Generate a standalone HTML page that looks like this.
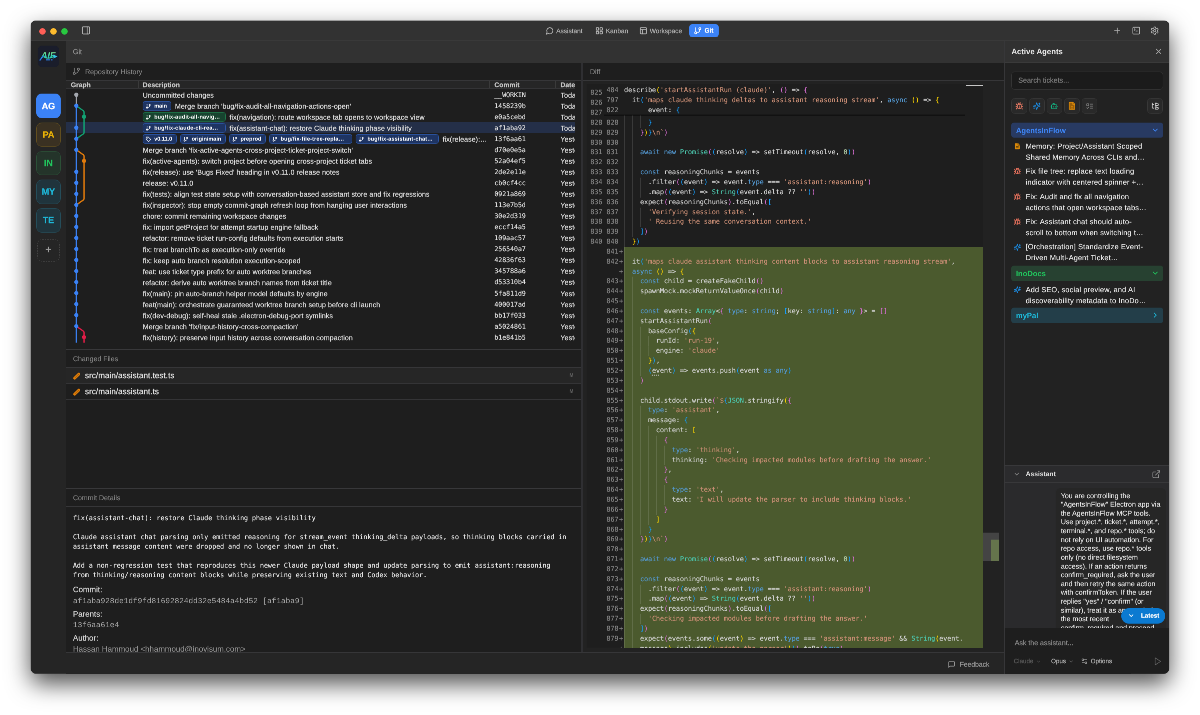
<!DOCTYPE html>
<html lang="en"><head><meta charset="utf-8"><title>AgentsInFlow – Git</title>
<style>
html,body{margin:0;padding:0;background:#fff;width:1200px;height:715px;overflow:hidden}
*{box-sizing:border-box}
body{font-family:"Liberation Sans",sans-serif;-webkit-font-smoothing:antialiased}
#win{will-change:transform;text-rendering:geometricPrecision;position:absolute;left:0;top:0;width:2277px;height:1306px;transform:translate(30.7px,20.6px) scale(.5);transform-origin:0 0;border-radius:11px;overflow:hidden;-webkit-text-stroke:.3px;background:#1e1e1e;box-shadow:0 20px 48px rgba(0,0,0,.7),0 0 1.5px rgba(0,0,0,.5);color:#ddd}
:where(#win *){position:absolute}
:where(#win) :where(span,svg,em,br){position:static}
#win .abs{position:absolute;display:block;line-height:0}
.ic{flex:none;display:block}
/* titlebar */
#titlebar{left:0;top:0;width:2277px;height:40.8px;background:#323232;border-bottom:2px solid #393939;z-index:5}
.tl{position:absolute;top:15.1px;width:13.4px;height:13.4px;border-radius:50%}
.tab{top:7.4px;height:26px;display:flex;align-items:center;font-size:13px;color:#b2b2b2;white-space:nowrap}
.tab svg{margin-right:5px}
.tab.active{top:6.8px;width:59.2px;padding-left:8.8px;background:#3b82f6;color:#fff;border-radius:6px;font-weight:bold}
/* sidebar */
#sidebar{left:0;top:0;width:70.6px;height:1306px;background:#252525}
#logo{left:14px;top:49.8px;width:43px;height:43px;background:#1a1d2b;border-radius:9px}
.proj{left:10.8px;width:49px;height:48.6px;border-radius:11px;font-weight:bold;font-size:18px;line-height:48.6px;text-align:center;border:1.5px solid transparent;letter-spacing:-.2px}
.proj.ag{background:#3b82f6;color:#fff}
.proj.pa{background:#3a3122;border-color:#66511f;color:#eab308;line-height:46px}
.proj.inn{background:#24342a;border-color:#2c5238;color:#22c55e;line-height:46px}
.proj.my{background:#20343c;border-color:#25505e;color:#1fb8d8;line-height:46px}
.proj.te{background:#20343c;border-color:#25505e;color:#1fb8d8;line-height:46px}
#addproj{left:13.2px;top:437.2px;width:44.5px;height:44.5px;border:1.5px dashed #454545;border-radius:10px;color:#a0a0a0;font-size:22px;line-height:40px;text-align:center}
/* git head */
#githead{z-index:3;left:70.6px;top:40px;width:1875.8px;height:44.5px;background:#323232;font-size:14.4px;color:#929292;line-height:46px;padding-left:13.6px}
/* panels */
.phead{left:0;width:100%;height:36.3px;display:flex;align-items:center;padding-left:13.8px;font-size:14px;color:#858585;-webkit-text-stroke:.15px;border-bottom:2px solid #363638;background:#1e1e1e;white-space:nowrap}
.phead.bt{border-top:2px solid #38383a;height:38px;padding-top:1px}
#left{left:70.6px;top:0;width:1034px;height:1262.8px;background:#1e1e1e;border-right:4px solid #2f2f32;overflow:hidden}
#left>.phead:first-child{padding-left:12.1px}
#thead{left:0;top:120.8px;width:1018.2px;height:16px;background:#262626;border-bottom:2px solid #343436;font-weight:bold;font-size:13.5px;color:#c6c6c6}
#thead span{position:absolute;top:-1px;line-height:17px}
#thead i{top:0;width:2px;height:14px;background:#3a3a3a}
#rows{left:0;top:0;width:1018.2px;height:700px}
.crow{left:0;width:1018.2px;height:22.04px;line-height:21.7px;font-size:14px;color:#dedede;letter-spacing:.15px}
.crow.sel{background:#242f48}
.cdesc{left:153.5px;top:0;width:690px;height:22.04px;overflow:hidden;white-space:nowrap;display:flex;align-items:center}
.cmsg{flex:none;position:relative;top:1.6px}
.chash{-webkit-text-stroke:.2px;left:856.6px;top:1.6px;font-family:"DejaVu Sans Mono",monospace;font-size:13.1px;letter-spacing:0;color:#e2e2e2}
.cdate{left:989px;top:1.6px;width:29.4px;overflow:hidden;white-space:nowrap}
.bdg{flex:none;display:inline-flex;align-items:center;height:18.6px;border:1.6px solid;border-radius:4.5px;padding:0 7.6px 0 5.1px;margin-right:7.3px;font-weight:bold;font-size:11px;letter-spacing:0;color:#fff;line-height:16px;-webkit-text-stroke:0;padding-top:1.4px}
.bdg svg{margin-right:6.2px}
.bdg.bl{background:#1e3463;border-color:#2e5bb0}
.bdg.gr{background:#17432f;border-color:#1f7a4c}
.frow{left:0;width:100%;height:32px;padding-top:1.5px;border-bottom:2px solid #343436;display:flex;align-items:center;padding-left:12.4px;font-size:16.1px;letter-spacing:.1px;color:#e2e2e2;white-space:nowrap}
.frow.on{background:#262626}
.frow svg{margin-right:7.6px}
.frow em{position:absolute;right:15px;top:9px;font-style:normal;font-weight:bold;font-size:9.5px;line-height:12px;color:#707070;-webkit-text-stroke:0}
#cdet{left:0;top:972.8px;width:100%;height:292px;overflow:hidden}
#cmsg{-webkit-text-stroke:.2px;left:13.8px;top:14.3px;font-family:"DejaVu Sans Mono",monospace;font-size:13.22px;line-height:18.94px;color:#e8e8e8;white-space:pre}
.ml{position:static}
.lbl{left:13.8px;font-size:15.6px;letter-spacing:.1px;line-height:20px;color:#d4d4d4;margin-top:-971.6px}
.val{-webkit-text-stroke:0;left:13.8px;font-family:"Liberation Mono",monospace;font-size:15.42px;line-height:22px;color:#a6a6a6;margin-top:-971.6px;white-space:nowrap}
.val.sans{font-family:"Liberation Sans",sans-serif;font-size:15.8px;color:#949494;-webkit-text-stroke:.1px}
/* diff */
#diff{left:1104.6px;top:0;width:842px;height:1262.8px;background:#222}
#editor{-webkit-text-stroke:.22px;left:7.6px;top:127.2px;width:792.6px;height:1127.2px;background:#1e1e1e;overflow:hidden;font-family:"DejaVu Sans Mono",monospace;font-size:13.25px;color:#d4d4d4}
#lines{left:0;top:8.2px;width:100%}
.cl{position:relative;height:19.85px;line-height:19.85px;white-space:pre;width:100%}
.ln1{position:absolute;left:0;width:31px;text-align:right;color:#858585}
.ln2{position:absolute;left:0;width:63.2px;text-align:right;color:#858585}
.pl{position:absolute;left:64.6px;color:#858585}
.cd{position:absolute;left:74.6px;right:0;top:0;height:100%}
.ins .cd{background:#4b5a2e;box-shadow:0 1px 0 #4b5a2e}
.ig{top:0;width:1px;height:100%;background:rgba(255,255,255,.13)}
#sticky{left:34.6px;top:0;width:721.8px;height:60.6px;background:#1e1e1e;padding-top:2.8px}
.sl{position:relative;height:19.8px;line-height:19.8px;white-space:pre}
.sl .ln2{width:28.6px}
.sl .cd{left:40px}
#tick{left:758.8px;top:1.7px;width:33.6px;height:2px;background:#c6c6c6}
#stsh{left:0;top:100%;width:100%;height:3.4px;background:linear-gradient(rgba(0,0,0,.95),rgba(0,0,0,.55) 45%,rgba(0,0,0,0))}
#ovr{left:800.2px;top:127.2px;width:31.8px;height:1127.2px}
#ovv{left:0;top:896.6px;width:31.8px;height:56.8px;background:#444}
#ovg{left:15.8px;top:910.8px;width:16px;height:42.6px;background:#65744c}
.k{color:#569cd6}.t{color:#4ec9b0}.s{color:#ce9178}.n{color:#b5cea8}
.b0{color:#ffd700}.b1{color:#da70d6}.b2{color:#179fff}
/* footer */
#footer{left:70.6px;top:1262.8px;width:1876px;height:43.4px;background:#252525;border-top:2px solid #363638;font-size:13.5px;color:#9a9a9a}
#footer svg{position:absolute;left:1763.7px;top:15px}
#footer span{position:absolute;left:1787.4px;top:0;line-height:45.5px}
/* right */
#right{left:1946.4px;top:0;width:331px;height:1306px;background:#222;border-left:2px solid #38383a;z-index:4}
#rhead{left:0;top:40px;width:100%;height:44.5px;background:#313131;border-bottom:2px solid #3a3a3a;font-weight:bold;font-size:15.5px;color:#e6e6e6;line-height:46.5px;padding-left:13px;-webkit-text-stroke:0}
#search{left:13px;top:101.8px;width:303.6px;height:35.8px;background:#1b1b1b;border:1.6px solid #363636;border-radius:7px;padding-left:12.6px;font-size:14.3px;color:#7c7c7c;line-height:34px}
.fbtn{top:155.2px;width:31.2px;height:31px;border:1.6px solid #393939;border-radius:6.5px;background:#292929;display:flex;align-items:center;justify-content:center;margin-left:-.6px}
.grp{left:13px;width:303.6px;height:30.6px;border-radius:5.5px;font-weight:bold;font-size:15.2px;line-height:33.4px;padding-left:9px;-webkit-text-stroke:0}
.grp svg{position:absolute;right:7.6px;top:7px}
.grp.g1{background:#283a62;color:#3f86f6}
.grp.g2{background:#274131;color:#22c55e}
.grp.g3{background:#233e49;color:#1fb8d8}
.titem{left:13px;width:303.6px;height:50.4px}
.titem svg{position:absolute;left:4.2px;top:7.6px}
.tt{left:28.5px;top:4.4px;font-size:14.6px;line-height:22.1px;color:#ececec;white-space:nowrap;letter-spacing:.32px;-webkit-text-stroke:.15px}
#ahead{left:0;top:888.8px;width:100%;height:36px;background:#2b2b2d;border-top:2px solid #38383a;border-bottom:2px solid #38383a;display:flex;align-items:center;padding-left:17px;font-weight:bold;font-size:13.4px;color:#dedede;-webkit-text-stroke:0}
#ahead>svg{margin-right:10.5px}
#chat{left:0;top:924.8px;width:100%;height:290.4px;background:#2a2a2c;overflow:hidden}
#bubble{left:101.6px;top:10px;width:220.6px;height:400px;background:#262626;border-radius:10px;padding:6.8px 0 0 10.2px;font-size:14px;line-height:17.62px;color:#e6e6e6;white-space:nowrap;-webkit-text-stroke:.15px}
#bubble div{position:static}
#latest{left:232.4px;top:250px;width:88px;height:30.9px;border-radius:15.5px;background:#0b7ad1;color:#fff;font-weight:bold;font-size:12.5px;line-height:30.9px}
#latest svg{position:absolute;left:13.2px;top:8.6px}
#latest span{position:absolute;left:39.6px;top:0}
#inp{left:0;top:1215.2px;width:100%;height:91px;background:#1e1e1e}
#ask{left:19.6px;top:18.5px;font-size:14px;line-height:20px;color:#8a8a8a;white-space:nowrap}
#ctl{left:17.6px;top:57px;width:313px;height:18px;display:flex;align-items:center;font-size:12.4px;color:#b4b4b4;white-space:nowrap}
#ctl .dim{color:#5a5a5a}

.hint{text-decoration:underline dotted #c8c8c8;text-decoration-thickness:2px;text-underline-offset:3.5px}

</style></head>
<body>
<div id="win">

<div id="titlebar">
  <span class="tl" style="left:16.7px;background:#ff5f57"></span>
  <span class="tl" style="left:38.8px;background:#febc2e"></span>
  <span class="tl" style="left:60.9px;background:#28c840"></span>
  <span class="abs" style="left:101px;top:10.4px;color:#b4b4b4"><svg class="ic" width="19" height="19" viewBox="0 0 24 24" fill="none" stroke="currentColor" stroke-width="2" stroke-linecap="round" stroke-linejoin="round" style=""><rect width="18" height="18" x="3" y="3" rx="2"/><path d="M15 3v18"/></svg></span>
  <div class="tab" style="left:1029.5px"><svg class="ic" width="16.4" height="16.4" viewBox="0 0 24 24" fill="none" stroke="currentColor" stroke-width="2.5" stroke-linecap="round" stroke-linejoin="round" style=""><path d="M7.9 20A9 9 0 1 0 4 16.1L2 22Z"/></svg><span>Assistant</span></div>
  <div class="tab" style="left:1128.8px"><svg class="ic" width="16.4" height="16.4" viewBox="0 0 24 24" fill="none" stroke="currentColor" stroke-width="2.5" stroke-linecap="round" stroke-linejoin="round" style=""><rect width="7" height="7" x="3" y="3" rx="1"/><rect width="7" height="7" x="14" y="3" rx="1"/><rect width="7" height="7" x="14" y="14" rx="1"/><rect width="7" height="7" x="3" y="14" rx="1"/></svg><span>Kanban</span></div>
  <div class="tab" style="left:1216.5px"><svg class="ic" width="16.4" height="16.4" viewBox="0 0 24 24" fill="none" stroke="currentColor" stroke-width="2.5" stroke-linecap="round" stroke-linejoin="round" style=""><rect width="18" height="18" x="3" y="3" rx="2"/><path d="M3 9h18"/><path d="M9 21V9"/></svg><span>Workspace</span></div>
  <div class="tab active" style="left:1317.2px"><svg class="ic" width="16.4" height="16.4" viewBox="0 0 24 24" fill="none" stroke="currentColor" stroke-width="2.5" stroke-linecap="round" stroke-linejoin="round" style=""><line x1="6" x2="6" y1="3" y2="15"/><circle cx="18" cy="6" r="3"/><circle cx="6" cy="18" r="3"/><path d="M18 9a9 9 0 0 1-9 9"/></svg><span>Git</span></div>
  <span class="abs" style="left:2164px;top:11.3px;color:#b4b4b4"><svg class="ic" width="18" height="18" viewBox="0 0 24 24" fill="none" stroke="currentColor" stroke-width="2" stroke-linecap="round" stroke-linejoin="round" style=""><path d="M5 12h14"/><path d="M12 5v14"/></svg></span>
  <span class="abs" style="left:2201.6px;top:11.3px;color:#b4b4b4"><svg class="ic" width="18" height="18" viewBox="0 0 24 24" fill="none" stroke="currentColor" stroke-width="2" stroke-linecap="round" stroke-linejoin="round" style=""><path d="m7 11 2-2-2-2"/><path d="M11 13h4"/><rect width="18" height="18" x="3" y="3" rx="2" ry="2"/></svg></span>
  <span class="abs" style="left:2239px;top:11.3px;color:#b4b4b4"><svg class="ic" width="18" height="18" viewBox="0 0 24 24" fill="none" stroke="currentColor" stroke-width="2" stroke-linecap="round" stroke-linejoin="round" style=""><path d="M12.22 2h-.44a2 2 0 0 0-2 2v.18a2 2 0 0 1-1 1.73l-.43.25a2 2 0 0 1-2 0l-.15-.08a2 2 0 0 0-2.73.73l-.22.38a2 2 0 0 0 .73 2.73l.15.1a2 2 0 0 1 1 1.72v.51a2 2 0 0 1-1 1.74l-.15.09a2 2 0 0 0-.73 2.73l.22.38a2 2 0 0 0 2.73.73l.15-.08a2 2 0 0 1 2 0l.43.25a2 2 0 0 1 1 1.73V20a2 2 0 0 0 2 2h.44a2 2 0 0 0 2-2v-.18a2 2 0 0 1 1-1.73l.43-.25a2 2 0 0 1 2 0l.15.08a2 2 0 0 0 2.73-.73l.22-.39a2 2 0 0 0-.73-2.73l-.15-.08a2 2 0 0 1-1-1.74v-.5a2 2 0 0 1 1-1.74l.15-.09a2 2 0 0 0 .73-2.73l-.22-.38a2 2 0 0 0-2.73-.73l-.15.08a2 2 0 0 1-2 0l-.43-.25a2 2 0 0 1-1-1.73V4a2 2 0 0 0-2-2z"/><circle cx="12" cy="12" r="3"/></svg></span>
</div>


<div id="sidebar">
  <div id="logo"><svg width="43" height="43" viewBox="0 0 43 43">
    <defs><linearGradient id="lg" x1="0" y1="0" x2="0" y2="1"><stop offset="0" stop-color="#a6ec8a"/><stop offset="0.55" stop-color="#35d3a6"/><stop offset="1" stop-color="#2f9be8"/></linearGradient></defs>
    <text x="6.500" y="24.600" font-family="Liberation Sans, sans-serif" font-weight="bold" font-style="italic" font-size="17" textLength="29" lengthAdjust="spacingAndGlyphs" fill="url(#lg)">AIF</text>
    <path d="M4.600 28.800 L10.500 21.500" stroke="#2b7fe6" stroke-width="2.600" stroke-linecap="round" fill="none"/>
    <path d="M12 22.800 Q22 27.500 32 21.800" stroke="#35d3a6" stroke-width="2" fill="none"/>
    <path d="M31.500 17.800 L39.600 21.800 L31.500 25.800 Z" fill="#35c3ea"/>
    <path d="M17 28.400 H24 M26.500 28.400 H29.500" stroke="#2b7fe6" stroke-width="2.400" fill="none"/>
  </svg></div>
  <div class="proj ag" style="top:146.2px">AG</div>
  <div class="proj pa" style="top:203.5px">PA</div>
  <div class="proj inn" style="top:260.8px">IN</div>
  <div class="proj my" style="top:318.1px">MY</div>
  <div class="proj te" style="top:375.4px">TE</div>
  <div id="addproj">+</div>
</div>

<div id="githead"><span>Git</span></div>

<div id="left">
  <div class="phead" style="top:84.5px"><svg class="ic" width="16.5" height="16.5" viewBox="0 0 24 24" fill="none" stroke="currentColor" stroke-width="2" stroke-linecap="round" stroke-linejoin="round" style="margin-right:9.5px"><line x1="6" x2="6" y1="3" y2="15"/><circle cx="18" cy="6" r="3"/><circle cx="6" cy="18" r="3"/><path d="M18 9a9 9 0 0 1-9 9"/></svg><span>Repository History</span></div>
  <div id="thead">
    <span style="left:9.6px">Graph</span><i style="left:144px"></i>
    <span style="left:153.5px">Description</span><i style="left:846px"></i>
    <span style="left:856.6px">Commit</span><i style="left:978px"></i>
    <span style="left:989px">Date</span>
  </div>
  <div id="rows"><div class="crow" style="top:137.20px"><div class="cdesc"><span class="cmsg">Uncommitted changes</span></div><div class="chash">__WORKIN</div><div class="cdate">Toda</div></div><div class="crow" style="top:159.24px"><div class="cdesc"><span class="bdg bl"><svg class="ic" width="10.5" height="10.5" viewBox="0 0 24 24" fill="none" stroke="currentColor" stroke-width="2.6" stroke-linecap="round" stroke-linejoin="round" style=""><line x1="6" x2="6" y1="3" y2="15"/><circle cx="18" cy="6" r="3"/><circle cx="6" cy="18" r="3"/><path d="M18 9a9 9 0 0 1-9 9"/></svg><span class="bt">main</span></span><span class="cmsg">Merge branch 'bug/fix-audit-all-navigation-actions-open'</span></div><div class="chash">1458239b</div><div class="cdate">Toda</div></div><div class="crow" style="top:181.28px"><div class="cdesc"><span class="bdg gr" style="width:166px;letter-spacing:.28px"><svg class="ic" width="10.5" height="10.5" viewBox="0 0 24 24" fill="none" stroke="currentColor" stroke-width="2.6" stroke-linecap="round" stroke-linejoin="round" style=""><line x1="6" x2="6" y1="3" y2="15"/><circle cx="18" cy="6" r="3"/><circle cx="6" cy="18" r="3"/><path d="M18 9a9 9 0 0 1-9 9"/></svg><span class="bt">bug/fix-audit-all-navig…</span></span><span class="cmsg">fix(navigation): route workspace tab opens to workspace view</span></div><div class="chash">e0a5cebd</div><div class="cdate">Toda</div></div><div class="crow sel" style="top:203.32px"><div class="cdesc"><span class="bdg bl" style="width:166px;letter-spacing:.28px"><svg class="ic" width="10.5" height="10.5" viewBox="0 0 24 24" fill="none" stroke="currentColor" stroke-width="2.6" stroke-linecap="round" stroke-linejoin="round" style=""><line x1="6" x2="6" y1="3" y2="15"/><circle cx="18" cy="6" r="3"/><circle cx="6" cy="18" r="3"/><path d="M18 9a9 9 0 0 1-9 9"/></svg><span class="bt">bug/fix-claude-cli-rea…</span></span><span class="cmsg">fix(assistant-chat): restore Claude thinking phase visibility</span></div><div class="chash">af1aba92</div><div class="cdate">Toda</div></div><div class="crow" style="top:225.36px"><div class="cdesc"><span class="bdg bl"><svg class="ic" width="10.5" height="10.5" viewBox="0 0 24 24" fill="none" stroke="currentColor" stroke-width="2.6" stroke-linecap="round" stroke-linejoin="round" style=""><path d="M12.586 2.586A2 2 0 0 0 11.172 2H4a2 2 0 0 0-2 2v7.172a2 2 0 0 0 .586 1.414l8.704 8.704a2.426 2.426 0 0 0 3.420 0l6.580-6.580a2.426 2.426 0 0 0 0-3.420z"/><circle cx="7.500" cy="7.500" r=".5" fill="currentColor"/></svg><span class="bt">v0.11.0</span></span><span class="bdg bl"><svg class="ic" width="10.5" height="10.5" viewBox="0 0 24 24" fill="none" stroke="currentColor" stroke-width="2.6" stroke-linecap="round" stroke-linejoin="round" style=""><line x1="6" x2="6" y1="3" y2="15"/><circle cx="18" cy="6" r="3"/><circle cx="6" cy="18" r="3"/><path d="M18 9a9 9 0 0 1-9 9"/></svg><span class="bt">origin/main</span></span><span class="bdg bl"><svg class="ic" width="10.5" height="10.5" viewBox="0 0 24 24" fill="none" stroke="currentColor" stroke-width="2.6" stroke-linecap="round" stroke-linejoin="round" style=""><line x1="6" x2="6" y1="3" y2="15"/><circle cx="18" cy="6" r="3"/><circle cx="6" cy="18" r="3"/><path d="M18 9a9 9 0 0 1-9 9"/></svg><span class="bt">preprod</span></span><span class="bdg bl" style="width:166px;letter-spacing:.28px"><svg class="ic" width="10.5" height="10.5" viewBox="0 0 24 24" fill="none" stroke="currentColor" stroke-width="2.6" stroke-linecap="round" stroke-linejoin="round" style=""><line x1="6" x2="6" y1="3" y2="15"/><circle cx="18" cy="6" r="3"/><circle cx="6" cy="18" r="3"/><path d="M18 9a9 9 0 0 1-9 9"/></svg><span class="bt">bug/fix-file-tree-repla…</span></span><span class="bdg bl" style="width:166px;letter-spacing:.28px"><svg class="ic" width="10.5" height="10.5" viewBox="0 0 24 24" fill="none" stroke="currentColor" stroke-width="2.6" stroke-linecap="round" stroke-linejoin="round" style=""><line x1="6" x2="6" y1="3" y2="15"/><circle cx="18" cy="6" r="3"/><circle cx="6" cy="18" r="3"/><path d="M18 9a9 9 0 0 1-9 9"/></svg><span class="bt">bug/fix-assistant-chat…</span></span><span class="cmsg">fix(release):…</span></div><div class="chash">13f6aa61</div><div class="cdate">Yeste</div></div><div class="crow" style="top:247.40px"><div class="cdesc"><span class="cmsg">Merge branch 'fix-active-agents-cross-project-ticket-project-switch'</span></div><div class="chash">d70e0e5a</div><div class="cdate">Yeste</div></div><div class="crow" style="top:269.44px"><div class="cdesc"><span class="cmsg">fix(active-agents): switch project before opening cross-project ticket tabs</span></div><div class="chash">52a04ef5</div><div class="cdate">Yeste</div></div><div class="crow" style="top:291.48px"><div class="cdesc"><span class="cmsg">fix(release): use 'Bugs Fixed' heading in v0.11.0 release notes</span></div><div class="chash">2de2e11e</div><div class="cdate">Yeste</div></div><div class="crow" style="top:313.52px"><div class="cdesc"><span class="cmsg">release: v0.11.0</span></div><div class="chash">cb0cf4cc</div><div class="cdate">Yeste</div></div><div class="crow" style="top:335.56px"><div class="cdesc"><span class="cmsg">fix(tests): align test state setup with conversation-based assistant store and fix regressions</span></div><div class="chash">0921a869</div><div class="cdate">Yeste</div></div><div class="crow" style="top:357.60px"><div class="cdesc"><span class="cmsg">fix(inspector): stop empty commit-graph refresh loop from hanging user interactions</span></div><div class="chash">113e7b5d</div><div class="cdate">Yeste</div></div><div class="crow" style="top:379.64px"><div class="cdesc"><span class="cmsg">chore: commit remaining workspace changes</span></div><div class="chash">30e2d319</div><div class="cdate">Yeste</div></div><div class="crow" style="top:401.68px"><div class="cdesc"><span class="cmsg">fix: import getProject for attempt startup engine fallback</span></div><div class="chash">eccf14a5</div><div class="cdate">Yeste</div></div><div class="crow" style="top:423.72px"><div class="cdesc"><span class="cmsg">refactor: remove ticket run-config defaults from execution starts</span></div><div class="chash">109aac57</div><div class="cdate">Yeste</div></div><div class="crow" style="top:445.76px"><div class="cdesc"><span class="cmsg">fix: treat branchTo as execution-only override</span></div><div class="chash">256540a7</div><div class="cdate">Yeste</div></div><div class="crow" style="top:467.80px"><div class="cdesc"><span class="cmsg">fix: keep auto branch resolution execution-scoped</span></div><div class="chash">42836f63</div><div class="cdate">Yeste</div></div><div class="crow" style="top:489.84px"><div class="cdesc"><span class="cmsg">feat: use ticket type prefix for auto worktree branches</span></div><div class="chash">345788a6</div><div class="cdate">Yeste</div></div><div class="crow" style="top:511.88px"><div class="cdesc"><span class="cmsg">refactor: derive auto worktree branch names from ticket title</span></div><div class="chash">d53310b4</div><div class="cdate">Yeste</div></div><div class="crow" style="top:533.92px"><div class="cdesc"><span class="cmsg">fix(main): pin auto-branch helper model defaults by engine</span></div><div class="chash">5fa811d9</div><div class="cdate">Yeste</div></div><div class="crow" style="top:555.96px"><div class="cdesc"><span class="cmsg">feat(main): orchestrate guaranteed worktree branch setup before cli launch</span></div><div class="chash">400017ad</div><div class="cdate">Yeste</div></div><div class="crow" style="top:578.00px"><div class="cdesc"><span class="cmsg">fix(dev-debug): self-heal stale .electron-debug-port symlinks</span></div><div class="chash">bb17f033</div><div class="cdate">Yeste</div></div><div class="crow" style="top:600.04px"><div class="cdesc"><span class="cmsg">Merge branch 'fix/input-history-cross-compaction'</span></div><div class="chash">a5024861</div><div class="cdate">Yeste</div></div><div class="crow" style="top:622.08px"><div class="cdesc"><span class="cmsg">fix(history): preserve input history across conversation compaction</span></div><div class="chash">b1e841b5</div><div class="cdate">Yeste</div></div></div>
  <svg id="graph" width="160" height="660" viewBox="0 0 160 660" style="position:absolute;left:0;top:0"><path d="M20.2 148.2 V170.3" stroke="#a3a7ae" stroke-width="2.6"/><path d="M20.2 170.3 V644.1" stroke="#3b82f6" stroke-width="2.8"/><path d="M20.2 170.3 L34.6 180.5 Q35.6 181.3 35.6 182.8 V223.9 Q35.6 225.4 34.6 226.2 L20.2 236.4" stroke="#12a273" fill="none" stroke-width="2.6"/><path d="M20.2 258.4 L34.6 268.6 Q35.6 269.4 35.6 270.9 V356.1 Q35.6 357.6 34.6 358.4 L20.2 368.6" stroke="#e07b0c" fill="none" stroke-width="2.6"/><path d="M20.2 611.1 L34.6 621.3 Q35.6 622.1 35.6 623.6 V644.1" stroke="#e11d48" fill="none" stroke-width="2.6"/><circle cx="20.2" cy="148.2" r="4.2" fill="#a3a7ae"/><circle cx="20.2" cy="170.3" r="4.2" fill="#3b82f6"/><circle cx="35.6" cy="192.3" r="4.2" fill="#12a273"/><circle cx="20.2" cy="214.3" r="4.2" fill="#3b82f6"/><circle cx="20.2" cy="236.4" r="4.2" fill="#3b82f6"/><circle cx="20.2" cy="258.4" r="4.2" fill="#3b82f6"/><circle cx="35.6" cy="280.5" r="4.2" fill="#e07b0c"/><circle cx="20.2" cy="302.5" r="4.2" fill="#3b82f6"/><circle cx="20.2" cy="324.5" r="4.2" fill="#3b82f6"/><circle cx="20.2" cy="346.6" r="4.2" fill="#3b82f6"/><circle cx="20.2" cy="368.6" r="4.2" fill="#3b82f6"/><circle cx="20.2" cy="390.7" r="4.2" fill="#3b82f6"/><circle cx="20.2" cy="412.7" r="4.2" fill="#3b82f6"/><circle cx="20.2" cy="434.7" r="4.2" fill="#3b82f6"/><circle cx="20.2" cy="456.8" r="4.2" fill="#3b82f6"/><circle cx="20.2" cy="478.8" r="4.2" fill="#3b82f6"/><circle cx="20.2" cy="500.9" r="4.2" fill="#3b82f6"/><circle cx="20.2" cy="522.9" r="4.2" fill="#3b82f6"/><circle cx="20.2" cy="544.9" r="4.2" fill="#3b82f6"/><circle cx="20.2" cy="567.0" r="4.2" fill="#3b82f6"/><circle cx="20.2" cy="589.0" r="4.2" fill="#3b82f6"/><circle cx="20.2" cy="611.1" r="4.2" fill="#3b82f6"/><circle cx="35.6" cy="633.1" r="4.2" fill="#e11d48"/></svg>
  <div class="phead bt" style="top:656.8px"><span>Changed Files</span></div>
  <div class="frow on" style="top:694.8px"><svg class="ic" width="18" height="18" viewBox="0 0 18 18"><g transform="rotate(-45 9 9)"><rect x="0.4" y="6.2" width="17.2" height="5.6" rx="2.8" fill="#df7d0a"/><circle cx="4.6" cy="9" r=".8" fill="#7a4304"/><circle cx="7.5" cy="9" r=".8" fill="#7a4304"/><circle cx="10.4" cy="9" r=".8" fill="#7a4304"/><circle cx="13.3" cy="9" r=".8" fill="#7a4304"/></g></svg><span>src/main/assistant.test.ts</span><em>M</em></div>
  <div class="frow" style="top:726.8px"><svg class="ic" width="18" height="18" viewBox="0 0 18 18"><g transform="rotate(-45 9 9)"><rect x="0.4" y="6.2" width="17.2" height="5.6" rx="2.8" fill="#df7d0a"/><circle cx="4.6" cy="9" r=".8" fill="#7a4304"/><circle cx="7.5" cy="9" r=".8" fill="#7a4304"/><circle cx="10.4" cy="9" r=".8" fill="#7a4304"/><circle cx="13.3" cy="9" r=".8" fill="#7a4304"/></g></svg><span>src/main/assistant.ts</span><em>M</em></div>
  <div class="phead bt" style="top:934.8px"><span>Commit Details</span></div>
  <div id="cdet">
    <div id="cmsg"><div class="ml">fix(assistant-chat): restore Claude thinking phase visibility</div><div class="ml">&nbsp;</div><div class="ml">Claude assistant chat parsing only emitted reasoning for stream_event thinking_delta payloads, so thinking blocks carried in</div><div class="ml">assistant message content were dropped and no longer shown in chat.</div><div class="ml">&nbsp;</div><div class="ml">Add a non-regression test that reproduces this newer Claude payload shape and update parsing to emit assistant:reasoning</div><div class="ml">from thinking/reasoning content blocks while preserving existing text and Codex behavior.</div></div>
    <div class="lbl" style="top:1128.2px">Commit:</div>
    <div class="val" style="top:1148.4px">af1aba928de1df9fd81692824dd32e5484a4bd52 [af1aba9]</div>
    <div class="lbl" style="top:1176.4px">Parents:</div>
    <div class="val" style="top:1197.2px">13f6aa61e4</div>
    <div class="lbl" style="top:1225px">Author:</div>
    <div class="val sans" style="top:1246px">Hassan Hammoud &lt;hhammoud@inovisum.com&gt;</div>
  </div>
</div>


<div id="diff">
  <div class="phead" style="top:84.5px;left:0;width:100%"><span>Diff</span></div>
  <div id="editor">
    <div id="lines"><div class="cl"><span class="ln1">825</span><span class="ln2">825</span><span class="cd"><i class="ig" style="left:0.00px"></i><i class="ig" style="left:15.95px"></i><i class="ig" style="left:31.90px"></i><i class="ig" style="left:47.85px"></i>        <span class="b2">}</span>,</span></div><div class="cl"><span class="ln1">826</span><span class="ln2">826</span><span class="cd"><i class="ig" style="left:0.00px"></i><i class="ig" style="left:15.95px"></i><i class="ig" style="left:31.90px"></i></span></div><div class="cl"><span class="ln1">827</span><span class="ln2">827</span><span class="cd"><i class="ig" style="left:0.00px"></i><i class="ig" style="left:15.95px"></i><i class="ig" style="left:31.90px"></i></span></div><div class="cl"><span class="ln1">828</span><span class="ln2">828</span><span class="cd"><i class="ig" style="left:0.00px"></i><i class="ig" style="left:15.95px"></i><i class="ig" style="left:31.90px"></i>      <span class="b2">}</span></span></div><div class="cl"><span class="ln1">829</span><span class="ln2">829</span><span class="cd"><i class="ig" style="left:0.00px"></i><i class="ig" style="left:15.95px"></i>    <span class="b1">}</span><span class="b0">)</span><span class="b2">}</span><span class="s">\n</span><span class="s">`</span><span class="b1">)</span></span></div><div class="cl"><span class="ln1">830</span><span class="ln2">830</span><span class="cd"><i class="ig" style="left:0.00px"></i><i class="ig" style="left:15.95px"></i></span></div><div class="cl"><span class="ln1">831</span><span class="ln2">831</span><span class="cd"><i class="ig" style="left:0.00px"></i><i class="ig" style="left:15.95px"></i>    <span class="k">await</span> <span class="k">new</span> <span class="t">Promise</span><span class="b1">(</span><span class="b2">(</span>resolve<span class="b2">)</span> =&gt; setTimeout<span class="b2">(</span>resolve, <span class="n">0</span><span class="b2">)</span><span class="b1">)</span></span></div><div class="cl"><span class="ln1">832</span><span class="ln2">832</span><span class="cd"><i class="ig" style="left:0.00px"></i><i class="ig" style="left:15.95px"></i></span></div><div class="cl"><span class="ln1">833</span><span class="ln2">833</span><span class="cd"><i class="ig" style="left:0.00px"></i><i class="ig" style="left:15.95px"></i>    <span class="k">const</span> reasoningChunks = events</span></div><div class="cl"><span class="ln1">834</span><span class="ln2">834</span><span class="cd"><i class="ig" style="left:0.00px"></i><i class="ig" style="left:15.95px"></i><i class="ig" style="left:31.90px"></i>      .filter<span class="b1">(</span><span class="b2">(</span>event<span class="b2">)</span> =&gt; event.<span class="k">type</span> === <span class="s">'assistant:reasoning'</span><span class="b1">)</span></span></div><div class="cl"><span class="ln1">835</span><span class="ln2">835</span><span class="cd"><i class="ig" style="left:0.00px"></i><i class="ig" style="left:15.95px"></i><i class="ig" style="left:31.90px"></i>      .map<span class="b1">(</span><span class="b2">(</span>event<span class="b2">)</span> =&gt; <span class="t">String</span><span class="b2">(</span>event.delta ?? <span class="s">''</span><span class="b2">)</span><span class="b1">)</span></span></div><div class="cl"><span class="ln1">836</span><span class="ln2">836</span><span class="cd"><i class="ig" style="left:0.00px"></i><i class="ig" style="left:15.95px"></i>    expect<span class="b1">(</span>reasoningChunks<span class="b1">)</span>.toEqual<span class="b1">(</span><span class="b2">[</span></span></div><div class="cl"><span class="ln1">837</span><span class="ln2">837</span><span class="cd"><i class="ig" style="left:0.00px"></i><i class="ig" style="left:15.95px"></i><i class="ig" style="left:31.90px"></i>      <span class="s">'Verifying session state.'</span>,</span></div><div class="cl"><span class="ln1">838</span><span class="ln2">838</span><span class="cd"><i class="ig" style="left:0.00px"></i><i class="ig" style="left:15.95px"></i><i class="ig" style="left:31.90px"></i>      <span class="s">' Reusing the same conversation context.'</span></span></div><div class="cl"><span class="ln1">839</span><span class="ln2">839</span><span class="cd"><i class="ig" style="left:0.00px"></i><i class="ig" style="left:15.95px"></i>    <span class="b2">]</span><span class="b1">)</span></span></div><div class="cl"><span class="ln1">840</span><span class="ln2">840</span><span class="cd"><i class="ig" style="left:0.00px"></i>  <span class="b0">}</span><span class="b2">)</span></span></div><div class="cl ins"><span class="ln1"></span><span class="ln2">841</span><span class="pl">+</span><span class="cd"><i class="ig" style="left:0.00px"></i></span></div><div class="cl ins"><span class="ln1"></span><span class="ln2">842</span><span class="pl">+</span><span class="cd"><i class="ig" style="left:0.00px"></i>  it<span class="b2">(</span><span class="s">'maps claude assistant thinking content blocks to assistant reasoning stream'</span>,</span></div><div class="cl ins"><span class="ln1"></span><span class="ln2"></span><span class="pl">+</span><span class="cd"><i class="ig" style="left:0.00px"></i>  <span class="k">async</span> <span class="b0">(</span><span class="b0">)</span> =&gt; <span class="b0">{</span></span></div><div class="cl ins"><span class="ln1"></span><span class="ln2">843</span><span class="pl">+</span><span class="cd"><i class="ig" style="left:0.00px"></i><i class="ig" style="left:15.95px"></i>    <span class="k">const</span> child = createFakeChild<span class="b1">(</span><span class="b1">)</span></span></div><div class="cl ins"><span class="ln1"></span><span class="ln2">844</span><span class="pl">+</span><span class="cd"><i class="ig" style="left:0.00px"></i><i class="ig" style="left:15.95px"></i>    spawnMock.mockReturnValueOnce<span class="b1">(</span>child<span class="b1">)</span></span></div><div class="cl ins"><span class="ln1"></span><span class="ln2">845</span><span class="pl">+</span><span class="cd"><i class="ig" style="left:0.00px"></i><i class="ig" style="left:15.95px"></i></span></div><div class="cl ins"><span class="ln1"></span><span class="ln2">846</span><span class="pl">+</span><span class="cd"><i class="ig" style="left:0.00px"></i><i class="ig" style="left:15.95px"></i>    <span class="k">const</span> events: <span class="t">Array</span>&lt;<span class="b1">{</span> <span class="k">type</span>: <span class="k">string</span>; <span class="b2">[</span>key: <span class="k">string</span><span class="b2">]</span>: <span class="k">any</span> <span class="b1">}</span>&gt; = <span class="b1">[</span><span class="b1">]</span></span></div><div class="cl ins"><span class="ln1"></span><span class="ln2">847</span><span class="pl">+</span><span class="cd"><i class="ig" style="left:0.00px"></i><i class="ig" style="left:15.95px"></i>    startAssistantRun<span class="b1">(</span></span></div><div class="cl ins"><span class="ln1"></span><span class="ln2">848</span><span class="pl">+</span><span class="cd"><i class="ig" style="left:0.00px"></i><i class="ig" style="left:15.95px"></i><i class="ig" style="left:31.90px"></i>      baseConfig<span class="b2">(</span><span class="b0">{</span></span></div><div class="cl ins"><span class="ln1"></span><span class="ln2">849</span><span class="pl">+</span><span class="cd"><i class="ig" style="left:0.00px"></i><i class="ig" style="left:15.95px"></i><i class="ig" style="left:31.90px"></i><i class="ig" style="left:47.85px"></i>        runId: <span class="s">'run-19'</span>,</span></div><div class="cl ins"><span class="ln1"></span><span class="ln2">850</span><span class="pl">+</span><span class="cd"><i class="ig" style="left:0.00px"></i><i class="ig" style="left:15.95px"></i><i class="ig" style="left:31.90px"></i><i class="ig" style="left:47.85px"></i>        engine: <span class="s">'claude'</span></span></div><div class="cl ins"><span class="ln1"></span><span class="ln2">851</span><span class="pl">+</span><span class="cd"><i class="ig" style="left:0.00px"></i><i class="ig" style="left:15.95px"></i><i class="ig" style="left:31.90px"></i>      <span class="b0">}</span><span class="b2">)</span>,</span></div><div class="cl ins"><span class="ln1"></span><span class="ln2">852</span><span class="pl">+</span><span class="cd"><i class="ig" style="left:0.00px"></i><i class="ig" style="left:15.95px"></i><i class="ig" style="left:31.90px"></i>      <span class="b2">(</span><span class="hint">ev</span>ent<span class="b2">)</span> =&gt; events.push<span class="b2">(</span>event <span class="k">as</span> <span class="k">any</span><span class="b2">)</span></span></div><div class="cl ins"><span class="ln1"></span><span class="ln2">853</span><span class="pl">+</span><span class="cd"><i class="ig" style="left:0.00px"></i><i class="ig" style="left:15.95px"></i>    <span class="b1">)</span></span></div><div class="cl ins"><span class="ln1"></span><span class="ln2">854</span><span class="pl">+</span><span class="cd"><i class="ig" style="left:0.00px"></i><i class="ig" style="left:15.95px"></i></span></div><div class="cl ins"><span class="ln1"></span><span class="ln2">855</span><span class="pl">+</span><span class="cd"><i class="ig" style="left:0.00px"></i><i class="ig" style="left:15.95px"></i>    child.stdout.write<span class="b1">(</span><span class="s">`</span><span class="s">$</span><span class="b2">{</span><span class="t">JSON</span>.stringify<span class="b0">(</span><span class="b1">{</span></span></div><div class="cl ins"><span class="ln1"></span><span class="ln2">856</span><span class="pl">+</span><span class="cd"><i class="ig" style="left:0.00px"></i><i class="ig" style="left:15.95px"></i><i class="ig" style="left:31.90px"></i>      <span class="k">type</span>: <span class="s">'assistant'</span>,</span></div><div class="cl ins"><span class="ln1"></span><span class="ln2">857</span><span class="pl">+</span><span class="cd"><i class="ig" style="left:0.00px"></i><i class="ig" style="left:15.95px"></i><i class="ig" style="left:31.90px"></i>      message: <span class="b2">{</span></span></div><div class="cl ins"><span class="ln1"></span><span class="ln2">858</span><span class="pl">+</span><span class="cd"><i class="ig" style="left:0.00px"></i><i class="ig" style="left:15.95px"></i><i class="ig" style="left:31.90px"></i><i class="ig" style="left:47.85px"></i>        content: <span class="b0">[</span></span></div><div class="cl ins"><span class="ln1"></span><span class="ln2">859</span><span class="pl">+</span><span class="cd"><i class="ig" style="left:0.00px"></i><i class="ig" style="left:15.95px"></i><i class="ig" style="left:31.90px"></i><i class="ig" style="left:47.85px"></i><i class="ig" style="left:63.80px"></i>          <span class="b1">{</span></span></div><div class="cl ins"><span class="ln1"></span><span class="ln2">860</span><span class="pl">+</span><span class="cd"><i class="ig" style="left:0.00px"></i><i class="ig" style="left:15.95px"></i><i class="ig" style="left:31.90px"></i><i class="ig" style="left:47.85px"></i><i class="ig" style="left:63.80px"></i><i class="ig" style="left:79.75px"></i>            <span class="k">type</span>: <span class="s">'thinking'</span>,</span></div><div class="cl ins"><span class="ln1"></span><span class="ln2">861</span><span class="pl">+</span><span class="cd"><i class="ig" style="left:0.00px"></i><i class="ig" style="left:15.95px"></i><i class="ig" style="left:31.90px"></i><i class="ig" style="left:47.85px"></i><i class="ig" style="left:63.80px"></i><i class="ig" style="left:79.75px"></i>            thinking: <span class="s">'Checking impacted modules before drafting the answer.'</span></span></div><div class="cl ins"><span class="ln1"></span><span class="ln2">862</span><span class="pl">+</span><span class="cd"><i class="ig" style="left:0.00px"></i><i class="ig" style="left:15.95px"></i><i class="ig" style="left:31.90px"></i><i class="ig" style="left:47.85px"></i><i class="ig" style="left:63.80px"></i>          <span class="b1">}</span>,</span></div><div class="cl ins"><span class="ln1"></span><span class="ln2">863</span><span class="pl">+</span><span class="cd"><i class="ig" style="left:0.00px"></i><i class="ig" style="left:15.95px"></i><i class="ig" style="left:31.90px"></i><i class="ig" style="left:47.85px"></i><i class="ig" style="left:63.80px"></i>          <span class="b1">{</span></span></div><div class="cl ins"><span class="ln1"></span><span class="ln2">864</span><span class="pl">+</span><span class="cd"><i class="ig" style="left:0.00px"></i><i class="ig" style="left:15.95px"></i><i class="ig" style="left:31.90px"></i><i class="ig" style="left:47.85px"></i><i class="ig" style="left:63.80px"></i><i class="ig" style="left:79.75px"></i>            <span class="k">type</span>: <span class="s">'text'</span>,</span></div><div class="cl ins"><span class="ln1"></span><span class="ln2">865</span><span class="pl">+</span><span class="cd"><i class="ig" style="left:0.00px"></i><i class="ig" style="left:15.95px"></i><i class="ig" style="left:31.90px"></i><i class="ig" style="left:47.85px"></i><i class="ig" style="left:63.80px"></i><i class="ig" style="left:79.75px"></i>            text: <span class="s">'I will update the parser to include thinking blocks.'</span></span></div><div class="cl ins"><span class="ln1"></span><span class="ln2">866</span><span class="pl">+</span><span class="cd"><i class="ig" style="left:0.00px"></i><i class="ig" style="left:15.95px"></i><i class="ig" style="left:31.90px"></i><i class="ig" style="left:47.85px"></i><i class="ig" style="left:63.80px"></i>          <span class="b1">}</span></span></div><div class="cl ins"><span class="ln1"></span><span class="ln2">867</span><span class="pl">+</span><span class="cd"><i class="ig" style="left:0.00px"></i><i class="ig" style="left:15.95px"></i><i class="ig" style="left:31.90px"></i><i class="ig" style="left:47.85px"></i>        <span class="b0">]</span></span></div><div class="cl ins"><span class="ln1"></span><span class="ln2">868</span><span class="pl">+</span><span class="cd"><i class="ig" style="left:0.00px"></i><i class="ig" style="left:15.95px"></i><i class="ig" style="left:31.90px"></i>      <span class="b2">}</span></span></div><div class="cl ins"><span class="ln1"></span><span class="ln2">869</span><span class="pl">+</span><span class="cd"><i class="ig" style="left:0.00px"></i><i class="ig" style="left:15.95px"></i>    <span class="b1">}</span><span class="b0">)</span><span class="b2">}</span><span class="s">\n</span><span class="s">`</span><span class="b1">)</span></span></div><div class="cl ins"><span class="ln1"></span><span class="ln2">870</span><span class="pl">+</span><span class="cd"><i class="ig" style="left:0.00px"></i><i class="ig" style="left:15.95px"></i></span></div><div class="cl ins"><span class="ln1"></span><span class="ln2">871</span><span class="pl">+</span><span class="cd"><i class="ig" style="left:0.00px"></i><i class="ig" style="left:15.95px"></i>    <span class="k">await</span> <span class="k">new</span> <span class="t">Promise</span><span class="b1">(</span><span class="b2">(</span>resolve<span class="b2">)</span> =&gt; setTimeout<span class="b2">(</span>resolve, <span class="n">0</span><span class="b2">)</span><span class="b1">)</span></span></div><div class="cl ins"><span class="ln1"></span><span class="ln2">872</span><span class="pl">+</span><span class="cd"><i class="ig" style="left:0.00px"></i><i class="ig" style="left:15.95px"></i></span></div><div class="cl ins"><span class="ln1"></span><span class="ln2">873</span><span class="pl">+</span><span class="cd"><i class="ig" style="left:0.00px"></i><i class="ig" style="left:15.95px"></i>    <span class="k">const</span> reasoningChunks = events</span></div><div class="cl ins"><span class="ln1"></span><span class="ln2">874</span><span class="pl">+</span><span class="cd"><i class="ig" style="left:0.00px"></i><i class="ig" style="left:15.95px"></i><i class="ig" style="left:31.90px"></i>      .filter<span class="b1">(</span><span class="b2">(</span>event<span class="b2">)</span> =&gt; event.<span class="k">type</span> === <span class="s">'assistant:reasoning'</span><span class="b1">)</span></span></div><div class="cl ins"><span class="ln1"></span><span class="ln2">875</span><span class="pl">+</span><span class="cd"><i class="ig" style="left:0.00px"></i><i class="ig" style="left:15.95px"></i><i class="ig" style="left:31.90px"></i>      .map<span class="b1">(</span><span class="b2">(</span>event<span class="b2">)</span> =&gt; <span class="t">String</span><span class="b2">(</span>event.delta ?? <span class="s">''</span><span class="b2">)</span><span class="b1">)</span></span></div><div class="cl ins"><span class="ln1"></span><span class="ln2">876</span><span class="pl">+</span><span class="cd"><i class="ig" style="left:0.00px"></i><i class="ig" style="left:15.95px"></i>    expect<span class="b1">(</span>reasoningChunks<span class="b1">)</span>.toEqual<span class="b1">(</span><span class="b2">[</span></span></div><div class="cl ins"><span class="ln1"></span><span class="ln2">877</span><span class="pl">+</span><span class="cd"><i class="ig" style="left:0.00px"></i><i class="ig" style="left:15.95px"></i><i class="ig" style="left:31.90px"></i>      <span class="s">'Checking impacted modules before drafting the answer.'</span></span></div><div class="cl ins"><span class="ln1"></span><span class="ln2">878</span><span class="pl">+</span><span class="cd"><i class="ig" style="left:0.00px"></i><i class="ig" style="left:15.95px"></i>    <span class="b2">]</span><span class="b1">)</span></span></div><div class="cl ins"><span class="ln1"></span><span class="ln2">879</span><span class="pl">+</span><span class="cd"><i class="ig" style="left:0.00px"></i><i class="ig" style="left:15.95px"></i>    expect<span class="b1">(</span>events.some<span class="b2">(</span><span class="b0">(</span>event<span class="b0">)</span> =&gt; event.<span class="k">type</span> === <span class="s">'assistant:message'</span> &amp;&amp; <span class="t">String</span><span class="b0">(</span>event.</span></div><div class="cl ins"><span class="ln1"></span><span class="ln2"></span><span class="pl">+</span><span class="cd"><i class="ig" style="left:0.00px"></i><i class="ig" style="left:15.95px"></i>    message<span class="b0">)</span>.includes<span class="b0">(</span><span class="s">'update the parser'</span><span class="b0">)</span><span class="b2">)</span><span class="b1">)</span>.toBe<span class="b1">(</span><span class="k">true</span><span class="b1">)</span></span></div></div>
    <div id="sticky"><div class="sl"><span class="ln2">484</span><span class="cd">describe<span class="b0">(</span><span class="s">'startAssistantRun (claude)'</span>, <span class="b1">(</span><span class="b1">)</span> =&gt; <span class="b1">{</span></span></div><div class="sl"><span class="ln2">797</span><span class="cd">  it<span class="b2">(</span><span class="s">'maps claude thinking deltas to assistant reasoning stream'</span>, <span class="k">async</span> <span class="b0">(</span><span class="b0">)</span> =&gt; <span class="b0">{</span></span></div><div class="sl"><span class="ln2">822</span><span class="cd">      event: <span class="b2">{</span></span></div><div id="stsh"></div></div>
    <div id="tick"></div>
  </div>
  <div id="ovr"><div id="ovv"></div><div id="ovg"></div></div>
</div>

<div id="footer"><svg class="ic" width="15.5" height="15.5" viewBox="0 0 24 24" fill="none" stroke="currentColor" stroke-width="2" stroke-linecap="round" stroke-linejoin="round" style=""><path d="M21 15a2 2 0 0 1-2 2H7l-4 4V5a2 2 0 0 1 2-2h14a2 2 0 0 1 2 2z"/></svg><span>Feedback</span></div>

<div id="right">
  <div id="rhead"><span>Active Agents</span><span class="abs" style="right:12.5px;top:13px;color:#a8a8a8"><svg class="ic" width="17.5" height="17.5" viewBox="0 0 24 24" fill="none" stroke="currentColor" stroke-width="2" stroke-linecap="round" stroke-linejoin="round" style=""><path d="M18 6 6 18"/><path d="m6 6 12 12"/></svg></span></div>
  <div id="search">Search tickets...</div>
  <div class="fbtn" style="left:13.6px"><svg class="ic" width="16" height="16" viewBox="0 0 24 24" fill="none" stroke="#e67a64" stroke-width="2.2" stroke-linecap="round" stroke-linejoin="round" style=""><path d="m8 2 1.88 1.88"/><path d="M14.12 3.88 16 2"/><path d="M9 7.13v-1a3.003 3.003 0 1 1 6 0v1"/><path d="M12 20c-3.3 0-6-2.700-6-6v-3a4 4 0 0 1 4-4h4a4 4 0 0 1 4 4v3c0 3.300-2.700 6-6 6"/><path d="M12 20v-9"/><path d="M6.530 9C4.600 8.800 3 7.100 3 5"/><path d="M6 13H2"/><path d="M3 21c0-2.100 1.700-3.900 3.800-4"/><path d="M20.970 5c0 2.100-1.600 3.800-3.500 4"/><path d="M22 13h-4"/><path d="M17.200 17c2.100.100 3.800 1.900 3.800 4"/></svg></div><div class="fbtn" style="left:48.8px"><svg class="ic" width="16" height="16" viewBox="0 0 24 24" fill="none" stroke="#1c8ee6" stroke-width="2.2" stroke-linecap="round" stroke-linejoin="round" style=""><path d="M9.937 15.500A2 2 0 0 0 8.500 14.063l-6.135-1.582a.5.5 0 0 1 0-.962L8.500 9.936A2 2 0 0 0 9.937 8.500l1.582-6.135a.5.5 0 0 1 .963 0L14.063 8.500A2 2 0 0 0 15.500 9.937l6.135 1.581a.5.5 0 0 1 0 .964L15.500 14.063a2 2 0 0 0-1.437 1.437l-1.582 6.135a.5.5 0 0 1-.963 0z"/><path d="M20 3v4"/><path d="M22 5h-4"/><path d="M4 17v2"/><path d="M5 18H3"/></svg></div><div class="fbtn" style="left:84px"><svg class="ic" width="16" height="16" viewBox="0 0 24 24" fill="none" stroke="#12b886" stroke-width="2.2" stroke-linecap="round" stroke-linejoin="round" style=""><path d="M12 8V4H8"/><rect width="16" height="12" x="4" y="8" rx="2"/><path d="M2 14h2"/><path d="M20 14h2"/><path d="M15 13v2"/><path d="M9 13v2"/></svg></div>
  <div class="fbtn" style="left:119.2px"><svg class="ic" width="17" height="17" viewBox="0 0 24 24"><path d="M15 2H6a2 2 0 0 0-2 2v16a2 2 0 0 0 2 2h12a2 2 0 0 0 2-2V7Z" fill="#9a5f08" stroke="#df8d0c" stroke-width="2.2"/><path d="M14 2v5a1 1 0 0 0 1 1h5M9 14h6M9 18h6" stroke="#df8d0c" stroke-width="1.8" fill="none"/></svg></div>
  <div class="fbtn" style="left:154.4px"><svg class="ic" width="16" height="16" viewBox="0 0 24 24" fill="none" stroke="#808080" stroke-width="2.2" stroke-linecap="round" stroke-linejoin="round" style=""><rect x="3" y="5" width="6" height="6" rx="1"/><path d="m3 17 2 2 4-4"/><path d="M13 6h8"/><path d="M13 12h8"/><path d="M13 18h8"/></svg></div>
  <div class="fbtn" style="left:285.4px"><svg class="ic" width="16" height="16" viewBox="0 0 24 24" fill="none" stroke="#d8d8d8" stroke-width="2.2" stroke-linecap="round" stroke-linejoin="round" style=""><path d="M20 10a1 1 0 0 0 1-1V6a1 1 0 0 0-1-1h-2.500a1 1 0 0 1-.8-.4l-.9-1.200A1 1 0 0 0 15 3h-2a1 1 0 0 0-1 1v5a1 1 0 0 0 1 1Z"/><path d="M20 21a1 1 0 0 0 1-1v-3a1 1 0 0 0-1-1h-2.900a1 1 0 0 1-.88-.55l-.42-.85a1 1 0 0 0-.92-.6H13a1 1 0 0 0-1 1v5a1 1 0 0 0 1 1Z"/><path d="M3 5a2 2 0 0 0 2 2h3"/><path d="M3 3v13a2 2 0 0 0 2 2h3"/></svg></div>
  <div class="grp g1" style="top:203.6px"><span>AgentsInFlow</span><svg class="ic" width="16" height="16" viewBox="0 0 24 24" fill="none" stroke="currentColor" stroke-width="2.6" stroke-linecap="round" stroke-linejoin="round" style=""><path d="m6 9 6 6 6-6"/></svg></div>
  <div class="titem" style="top:236.4px"><svg class="ic" width="14.5" height="14.5" viewBox="0 0 24 24"><path d="M15 2H6a2 2 0 0 0-2 2v16a2 2 0 0 0 2 2h12a2 2 0 0 0 2-2V7Z" fill="#d9880a"/><path d="M14 2v5a1 1 0 0 0 1 1h5M8 13h8M8 17h8" stroke="#3a2a08" stroke-width="2" fill="none"/></svg><div class="tt">Memory: Project/Assistant Scoped<br>Shared Memory Across CLIs and…</div></div><div class="titem" style="top:286.8px"><svg class="ic" width="14.5" height="14.5" viewBox="0 0 24 24" fill="none" stroke="#e3705c" stroke-width="2.5" stroke-linecap="round" stroke-linejoin="round" style=""><path d="m8 2 1.88 1.88"/><path d="M14.12 3.88 16 2"/><path d="M9 7.13v-1a3.003 3.003 0 1 1 6 0v1"/><path d="M12 20c-3.3 0-6-2.700-6-6v-3a4 4 0 0 1 4-4h4a4 4 0 0 1 4 4v3c0 3.300-2.700 6-6 6"/><path d="M12 20v-9"/><path d="M6.530 9C4.600 8.800 3 7.100 3 5"/><path d="M6 13H2"/><path d="M3 21c0-2.100 1.700-3.900 3.800-4"/><path d="M20.970 5c0 2.100-1.600 3.800-3.500 4"/><path d="M22 13h-4"/><path d="M17.200 17c2.100.100 3.800 1.900 3.800 4"/></svg><div class="tt">Fix file tree: replace text loading<br>indicator with centered spinner +…</div></div><div class="titem" style="top:337.2px"><svg class="ic" width="14.5" height="14.5" viewBox="0 0 24 24" fill="none" stroke="#e3705c" stroke-width="2.5" stroke-linecap="round" stroke-linejoin="round" style=""><path d="m8 2 1.88 1.88"/><path d="M14.12 3.88 16 2"/><path d="M9 7.13v-1a3.003 3.003 0 1 1 6 0v1"/><path d="M12 20c-3.3 0-6-2.700-6-6v-3a4 4 0 0 1 4-4h4a4 4 0 0 1 4 4v3c0 3.300-2.700 6-6 6"/><path d="M12 20v-9"/><path d="M6.530 9C4.600 8.800 3 7.100 3 5"/><path d="M6 13H2"/><path d="M3 21c0-2.100 1.700-3.900 3.800-4"/><path d="M20.970 5c0 2.100-1.600 3.800-3.500 4"/><path d="M22 13h-4"/><path d="M17.200 17c2.100.100 3.800 1.900 3.800 4"/></svg><div class="tt">Fix: Audit and fix all navigation<br>actions that open workspace tabs…</div></div><div class="titem" style="top:387.6px"><svg class="ic" width="14.5" height="14.5" viewBox="0 0 24 24" fill="none" stroke="#e3705c" stroke-width="2.5" stroke-linecap="round" stroke-linejoin="round" style=""><path d="m8 2 1.88 1.88"/><path d="M14.12 3.88 16 2"/><path d="M9 7.13v-1a3.003 3.003 0 1 1 6 0v1"/><path d="M12 20c-3.3 0-6-2.700-6-6v-3a4 4 0 0 1 4-4h4a4 4 0 0 1 4 4v3c0 3.300-2.700 6-6 6"/><path d="M12 20v-9"/><path d="M6.530 9C4.600 8.800 3 7.100 3 5"/><path d="M6 13H2"/><path d="M3 21c0-2.100 1.700-3.900 3.800-4"/><path d="M20.970 5c0 2.100-1.600 3.800-3.500 4"/><path d="M22 13h-4"/><path d="M17.200 17c2.100.100 3.800 1.900 3.800 4"/></svg><div class="tt">Fix: Assistant chat should auto-<br>scroll to bottom when switching t…</div></div><div class="titem" style="top:438.0px"><svg class="ic" width="14.5" height="14.5" viewBox="0 0 24 24" fill="none" stroke="#1c8ee6" stroke-width="2.5" stroke-linecap="round" stroke-linejoin="round" style=""><path d="M9.937 15.500A2 2 0 0 0 8.500 14.063l-6.135-1.582a.5.5 0 0 1 0-.962L8.500 9.936A2 2 0 0 0 9.937 8.500l1.582-6.135a.5.5 0 0 1 .963 0L14.063 8.500A2 2 0 0 0 15.500 9.937l6.135 1.581a.5.5 0 0 1 0 .964L15.500 14.063a2 2 0 0 0-1.437 1.437l-1.582 6.135a.5.5 0 0 1-.963 0z"/><path d="M20 3v4"/><path d="M22 5h-4"/><path d="M4 17v2"/><path d="M5 18H3"/></svg><div class="tt">[Orchestration] Standardize Event-<br>Driven Multi-Agent Ticket…</div></div><div class="titem" style="top:523.4px"><svg class="ic" width="14.5" height="14.5" viewBox="0 0 24 24" fill="none" stroke="#1c8ee6" stroke-width="2.5" stroke-linecap="round" stroke-linejoin="round" style=""><path d="M9.937 15.500A2 2 0 0 0 8.500 14.063l-6.135-1.582a.5.5 0 0 1 0-.962L8.500 9.936A2 2 0 0 0 9.937 8.500l1.582-6.135a.5.5 0 0 1 .963 0L14.063 8.500A2 2 0 0 0 15.500 9.937l6.135 1.581a.5.5 0 0 1 0 .964L15.500 14.063a2 2 0 0 0-1.437 1.437l-1.582 6.135a.5.5 0 0 1-.963 0z"/><path d="M20 3v4"/><path d="M22 5h-4"/><path d="M4 17v2"/><path d="M5 18H3"/></svg><div class="tt">Add SEO, social preview, and AI<br>discoverability metadata to InoDo…</div></div>
  <div class="grp g2" style="top:490.4px"><span>InoDocs</span><svg class="ic" width="16" height="16" viewBox="0 0 24 24" fill="none" stroke="currentColor" stroke-width="2.6" stroke-linecap="round" stroke-linejoin="round" style=""><path d="m6 9 6 6 6-6"/></svg></div>
  <div class="grp g3" style="top:574.2px"><span>myPal</span><svg class="ic" width="16" height="16" viewBox="0 0 24 24" fill="none" stroke="currentColor" stroke-width="2.6" stroke-linecap="round" stroke-linejoin="round" style=""><path d="m9 18 6-6-6-6"/></svg></div>
  <div id="ahead"><svg class="ic" width="14" height="14" viewBox="0 0 24 24" fill="none" stroke="#8c8c8c" stroke-width="2.2" stroke-linecap="round" stroke-linejoin="round" style=""><path d="m6 9 6 6 6-6"/></svg><span>Assistant</span><span class="abs" style="right:16.5px;top:7px;color:#a0a0a0"><svg class="ic" width="18.5" height="18.5" viewBox="0 0 24 24" fill="none" stroke="currentColor" stroke-width="1.9" stroke-linecap="round" stroke-linejoin="round" style=""><path d="M15 3h6v6"/><path d="M10 14 21 3"/><path d="M18 13v6a2 2 0 0 1-2 2H5a2 2 0 0 1-2-2V8a2 2 0 0 1 2-2h6"/></svg></span></div>
  <div id="chat"><div id="bubble"><div>You are controlling the</div><div>"AgentsInFlow" Electron app via</div><div>the AgentsInFlow MCP tools.</div><div>Use project.*, ticket.*, attempt.*,</div><div>terminal.*, and repo.* tools; do</div><div>not rely on UI automation. For</div><div>repo access, use repo.* tools</div><div>only (no direct filesystem</div><div>access). If an action returns</div><div>confirm_required, ask the user</div><div>and then retry the same action</div><div>with confirmToken. If the user</div><div>replies "yes" / "confirm" (or</div><div>similar), treat it as approval of</div><div>the most recent</div><div>confirm_required and proceed</div><div>with that action.</div></div>
    <div id="latest"><svg class="ic" width="14" height="14" viewBox="0 0 24 24" fill="none" stroke="#fff" stroke-width="3" stroke-linecap="round" stroke-linejoin="round" style=""><path d="m6 9 6 6 6-6"/></svg><span>Latest</span></div>
  </div>
  <div id="inp">
    <div id="ask">Ask the assistant...</div>
    <div id="ctl"><span class="dim">Claude</span><svg class="ic" width="11.5" height="11.5" viewBox="0 0 24 24" fill="none" stroke="#4a4a4a" stroke-width="2.2" stroke-linecap="round" stroke-linejoin="round" style="margin:1px 0 0 5px"><path d="m6 9 6 6 6-6"/></svg><span style="margin-left:19px">Opus</span><svg class="ic" width="11.5" height="11.5" viewBox="0 0 24 24" fill="none" stroke="#6a6a6a" stroke-width="2.2" stroke-linecap="round" stroke-linejoin="round" style="margin:1px 0 0 5px"><path d="m6 9 6 6 6-6"/></svg><svg class="ic" width="14.5" height="14.5" viewBox="0 0 24 24" fill="none" stroke="#aaa" stroke-width="2.2" stroke-linecap="round" stroke-linejoin="round" style="margin-left:13px"><path d="M20 7h-9"/><path d="M14 17H5"/><circle cx="17" cy="17" r="3"/><circle cx="7" cy="7" r="3"/></svg><span style="margin-left:5.5px">Options</span>
    <span class="abs" style="right:15.5px;top:0px;color:#666"><svg class="ic" width="19" height="19" viewBox="0 0 24 24" fill="none" stroke="currentColor" stroke-width="1.8" stroke-linecap="round" stroke-linejoin="round" style=""><polygon points="6 3 20 12 6 21 6 3"/></svg></span></div>
  </div>
</div>

</div>
</body></html>
